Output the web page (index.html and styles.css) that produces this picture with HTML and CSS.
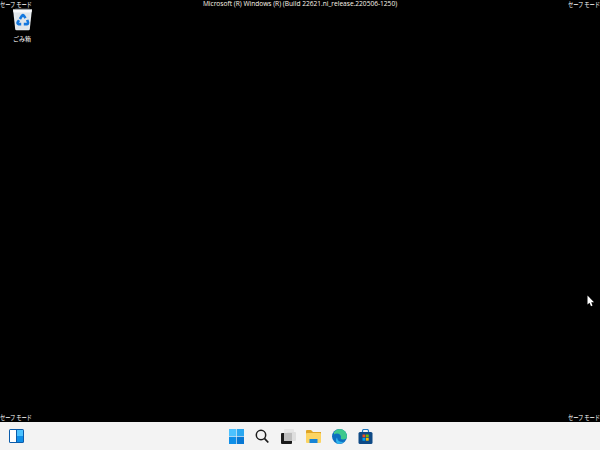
FILE: index.html
```html
<!DOCTYPE html>
<html lang="ja">
<head>
<meta charset="utf-8">
<title>セーフモード</title>
<link rel="stylesheet" href="styles.css">
</head>
<body>
<main class="desktop">
  <div class="row">
    <span class="safe safe-left">セーフ モード</span>
    <span class="build">Microsoft (R) Windows (R) (Build 22621.ni_release.220506-1250)</span>
    <span class="safe safe-right">セーフ モード</span>
  </div>
  <div class="row row-bottom">
    <span class="safe safe-left">セーフ モード</span>
    <span class="safe safe-right">セーフ モード</span>
  </div>
  <div class="bin">
    <svg class="bin-icon" width="21" height="24" viewBox="0 0 24 28">
      <path d="M1 3 L23 3 L20.5 26 Q20.3 27 19 27 L5 27 Q3.7 27 3.5 26 Z" fill="#e6ebef"/>
      <path d="M1 3 L23 3 L22.6 6 L1.4 6 Z" fill="#f7f8f9"/>
      <path d="M4 2 L20 2 L23 3.2 L1 3.2 Z" fill="#9a9fa3"/>
      <path d="M3.5 7 L20.5 7 L19 26 L5 26 Z" fill="#dfe5ea"/>
      <g fill="none" stroke="#1478de" stroke-width="3">
        <path d="M9 14 L11.5 10 Q12.5 9 13.5 10 L15.5 13"/>
        <path d="M17.5 15 L18.5 18 Q18.5 20 17 20 L13.5 20"/>
        <path d="M10.5 20 L7.5 20 Q5.5 19.5 6.5 17.5 L8 15.5"/>
      </g>
    </svg>
    <span class="bin-label">ごみ箱</span>
  </div>
  <svg class="cursor" width="8" height="12" viewBox="0 0 8 12">
    <path d="M0.5 0.5 L0.5 9.5 L2.5 7.8 L4 11.3 L5.5 10.6 L4.2 7.3 L7 7.3 Z" fill="#fff"/>
  </svg>
</main>
<footer class="taskbar">
  <svg class="widgets" width="15" height="14" viewBox="0 0 15 14">
    <rect width="15" height="14" rx="1.5" fill="#0b5cab"/>
    <rect x="1" y="1" width="6" height="12" fill="#fff"/>
    <rect x="8" y="1" width="6" height="6" fill="#4cc2ff"/>
    <rect x="8" y="7" width="6" height="6" fill="#0f8fe8"/>
  </svg>
  <div class="center">
    <svg class="ico" width="15" height="15" viewBox="0 0 15 15">
      <rect x="0" y="0" width="7.2" height="7.2" fill="#4cc2ff"/>
      <rect x="7.8" y="0" width="7.2" height="7.2" fill="#2aa7f0"/>
      <rect x="0" y="7.8" width="7.2" height="7.2" fill="#0f8fe8"/>
      <rect x="7.8" y="7.8" width="7.2" height="7.2" fill="#0878d4"/>
    </svg>
    <svg class="ico" width="15" height="15" viewBox="0 0 15 15">
      <circle cx="6" cy="6" r="4.7" fill="none" stroke="#1c1c1c" stroke-width="1.5"/>
      <path d="M9.4 9.4 L13.3 13.5" stroke="#1c1c1c" stroke-width="1.8" fill="none"/>
    </svg>
    <svg class="ico" width="15" height="15" viewBox="0 0 15 15">
      <rect x="3" y="0" width="10" height="9" rx="1" fill="#e6e6e6"/>
      <rect x="6" y="3" width="9" height="9" rx="1" fill="#dedede"/>
      <rect x="0" y="4" width="11" height="11" rx="1" fill="#1a1a1a"/>
      <rect x="3" y="4" width="8" height="8" fill="#bdbdbd"/>
    </svg>
    <svg class="ico" width="15" height="15" viewBox="0 0 15 15">
      <path d="M0 2 Q0 1 1 1 L5 1 L7 3 L15 3 L15 6 L0 6 Z" fill="#e0a526"/>
      <rect x="0" y="4" width="15" height="10" rx="1" fill="#fcd462"/>
      <rect x="3.5" y="10" width="8" height="4" fill="#1784d6"/>
    </svg>
    <svg class="ico" width="15" height="15" viewBox="0 0 15 15">
      <circle cx="7.5" cy="7.5" r="7.5" fill="#0d6fc0"/>
      <path d="M2 3 Q4.5 0 8 0 Q14.5 0.5 15 7.5 Q15 10.5 11 10.5 Q8 10.5 9 8 Q8.5 4.5 5 4.5 Q3 4.5 2 5.5 Z" fill="#3ec88d"/>
      <path d="M5 8.5 Q5.5 13 11 13 L13 12 Q8.5 16 5 14.5 Q3 11 5 8.5 Z" fill="#2fb4ee"/>
    </svg>
    <svg class="ico" width="15" height="15" viewBox="0 0 15 15">
      <path d="M4.5 4 L4.5 2 Q4.5 0.5 6 0.5 L9 0.5 Q10.5 0.5 10.5 2 L10.5 4" fill="none" stroke="#1f7ac2" stroke-width="1.2"/>
      <rect x="0.5" y="3" width="14" height="12" rx="1.5" fill="#0f4a86"/>
      <rect x="4.5" y="5.5" width="2.8" height="2.8" fill="#f25022"/>
      <rect x="7.9" y="5.5" width="2.8" height="2.8" fill="#7fba00"/>
      <rect x="4.5" y="8.9" width="2.8" height="2.8" fill="#00a4ef"/>
      <rect x="7.9" y="8.9" width="2.8" height="2.8" fill="#ffb900"/>
    </svg>
  </div>
</footer>
</body>
</html>
```
FILE: styles.css
```css
* { box-sizing: border-box; }
html, body { margin: 0; height: 100%; overflow: hidden; }
body {
  display: flex;
  flex-direction: column;
  width: 600px;
  height: 450px;
  font-family: "Noto Sans CJK JP", "Noto Sans", sans-serif;
}
.desktop {
  position: relative;
  flex: 1;
  background: #000;
  color: #fff;
  display: flex;
  flex-direction: column;
  justify-content: space-between;
}
.row {
  display: flex;
  justify-content: space-between;
  font-size: 7px;
  line-height: 8px;
  height: 8px;
}
.row-bottom { height: 9px; }
.safe {
  display: block;
  width: 42px;
  letter-spacing: -0.2px;
  white-space: nowrap;
  transform: scaleX(0.76);
}
.safe-left { transform-origin: left center; }
.safe-right { transform-origin: right center; }
.build {
  font-family: "Open Sans", "Noto Sans", sans-serif;
  font-size: 6.6px;
  color: #fff6ea;
  white-space: nowrap;
}
.bin {
  position: absolute;
  left: 4px;
  top: 7px;
  width: 36px;
  display: flex;
  flex-direction: column;
  align-items: center;
  gap: 4px;
}
.bin-icon { display: block; }
.bin-label { font-size: 6px; line-height: 8px; color: #fff; }
.cursor { position: absolute; left: 587px; top: 295px; }
.taskbar {
  height: 28px;
  flex: none;
  background: #f3f3f3;
  position: relative;
  display: flex;
  align-items: center;
  justify-content: center;
}
.widgets { position: absolute; left: 9px; top: 7px; }
.center {
  display: flex;
  align-items: center;
  gap: 10.8px;
  padding-left: 2px;
}
.ico { flex: none; display: block; }
```
